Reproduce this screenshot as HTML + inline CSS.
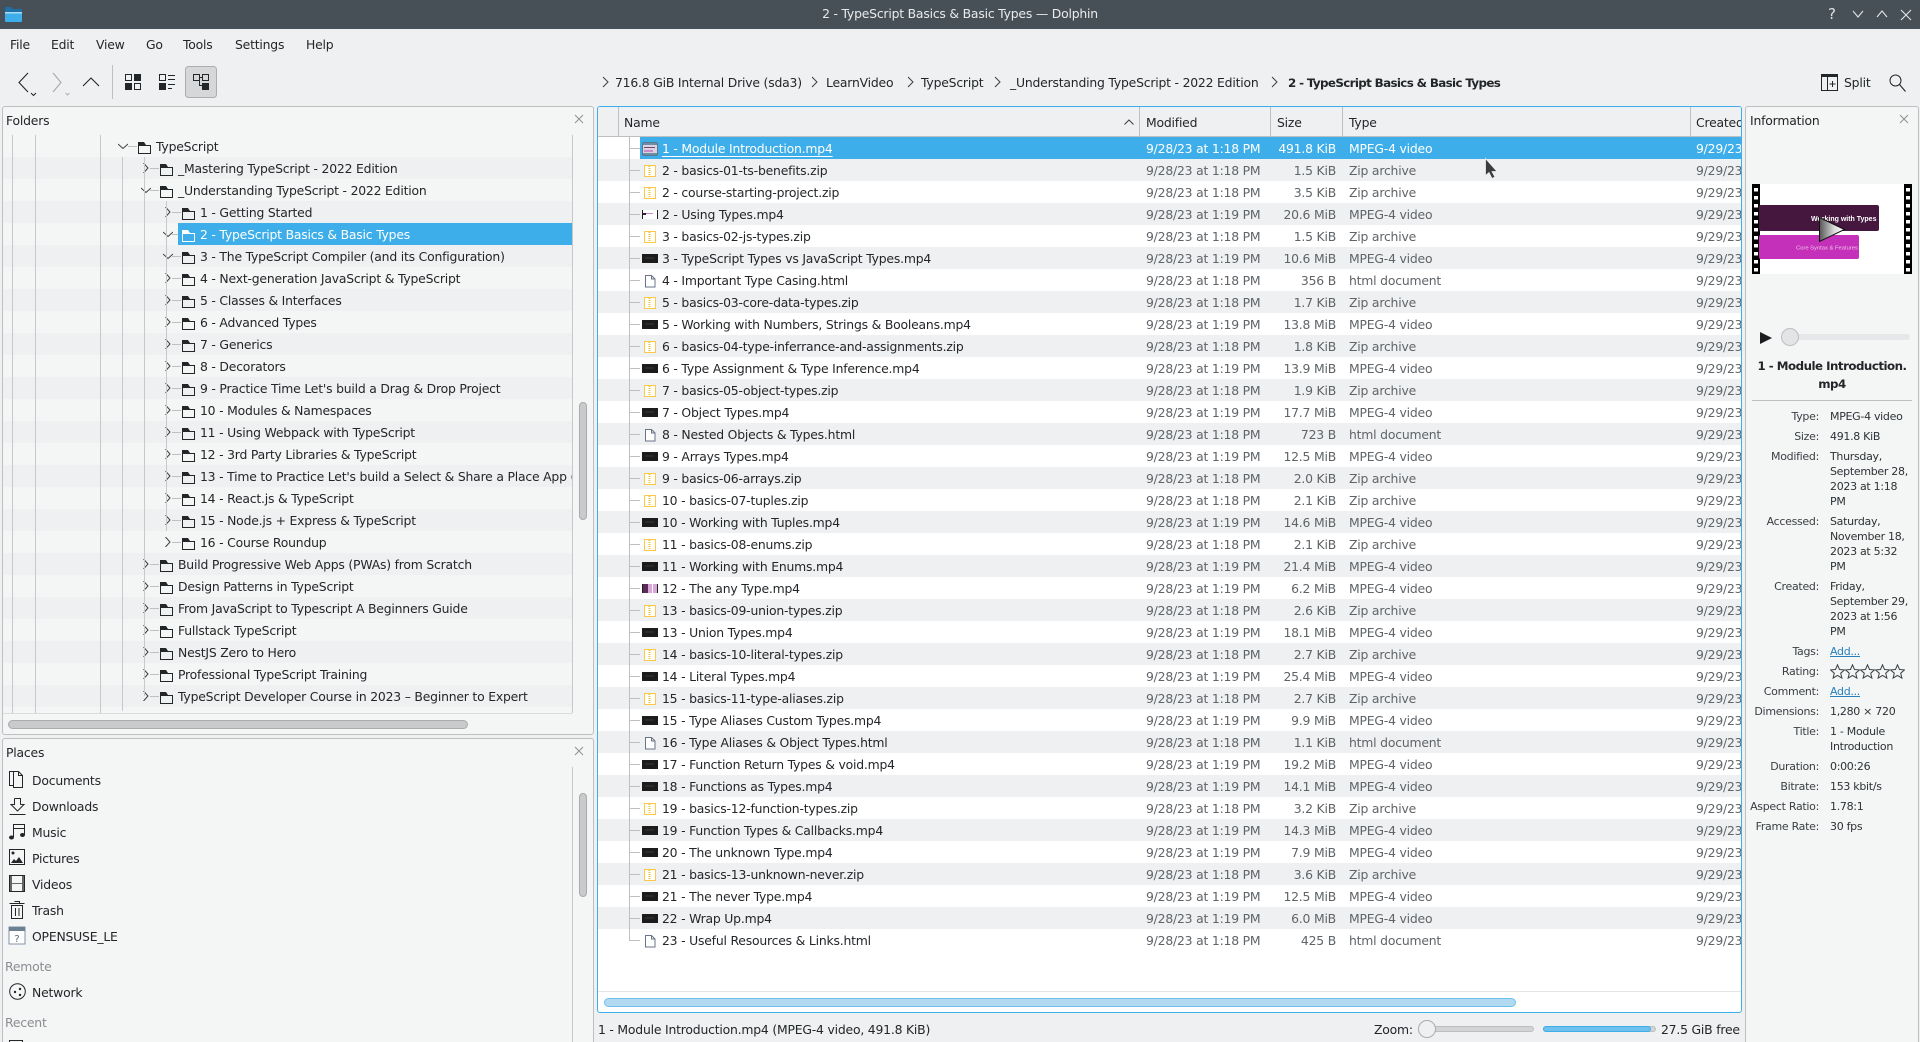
<!DOCTYPE html>
<html><head><meta charset="utf-8"><title>Dolphin</title>
<style>
*{box-sizing:border-box}
html,body{margin:0;padding:0;width:1920px;height:1042px;overflow:hidden;background:#eff0f1;font-family:"DejaVu Sans","Liberation Sans",sans-serif;font-size:12.4px;letter-spacing:-.2px;color:#232629}
.a{position:absolute;white-space:nowrap;line-height:24px;height:22px}
svg{position:absolute;display:block;overflow:visible}
.tb{position:absolute;left:0;top:0;width:1920px;height:29px;background:#475057}
.panel{position:absolute;background:#f4f5f5;border:1px solid #bdbfc0;border-radius:3px}
#view{position:absolute;left:597px;top:106px;width:1145px;height:907px;border:1px solid #3daee9;border-radius:3px;background:#fff;overflow:hidden}
#hd{position:absolute;left:0;top:0;width:1143px;height:30px;background:#eff0f1;border-bottom:1px solid #bdbfc0}
#hd i{position:absolute;top:0;width:1px;height:29px;background:#bdbfc0}
#list{position:absolute;left:0;top:30px;width:1143px;overflow:hidden}
.r{position:relative;height:22px;width:1143px;line-height:24px;white-space:nowrap}
.r:nth-child(even){background:#eff0f1}
.r::before{content:"";position:absolute;left:31px;top:11px;width:11px;height:1px;background:#bdbfc0}
.r svg{left:44px;top:3px;width:16px;height:16px}
.r b{position:absolute;left:64px;font-weight:normal}
.r span{position:absolute;color:#5f6468}
.m{left:548px}.s{left:640px;width:98px;text-align:right}.y{left:751px}.c{left:1098px}
#tree{position:absolute;left:3px;top:135px;width:569px;height:578px;overflow:hidden}
.tr{position:relative;height:22px;width:569px;line-height:24px;white-space:nowrap}
.tr:nth-child(even){background:#eff0f1}
.tr b{position:absolute;font-weight:normal}
.tr svg.f{top:7px;width:13px;height:12px}
.tr svg.x{top:6px;width:10px;height:10px}
.tr u{position:absolute;top:11px;height:1px;width:9px;background:#bdbfc0}
.l1 svg.x{left:115px}.l1 svg.f{left:135px}.l1 b{left:153px}.l1 u{left:125px}
.l2 svg.x{left:138px}.l2 svg.f{left:157px}.l2 b{left:175px}.l2 u{left:147px}
.l3 svg.x{left:160px}.l3 svg.f{left:179px}.l3 b{left:197px}.l3 u{left:169px}
.sel{background:#3daee9!important;position:absolute;left:178px;top:223px;width:394px;height:22px}
.g{position:absolute;width:1px;background:#c6c8c9}
.lab{position:absolute;left:1745px;width:74px;text-align:right;line-height:15px;height:15px;font-size:11px;letter-spacing:-.3px;white-space:nowrap;color:#3a3f43}
.val{position:absolute;left:1830px;line-height:15px;font-size:11px;letter-spacing:-.3px;white-space:nowrap;color:#2d3236}
.link{color:#2980b9;text-decoration:underline}
.hdr{color:#8a8e91}
</style></head><body>
<svg width="0" height="0" style="position:absolute">
<defs>
<symbol id="z" viewBox="0 0 16 16"><rect x="2.5" y="3.5" width="11" height="11" fill="#fff" stroke="#fbc947"/><path d="M7.5 4v9" stroke="#f5c040" stroke-dasharray="1 1" stroke-width="2"/></symbol>
<symbol id="v" viewBox="0 0 16 16"><rect x="0" y="4" width="16" height="9" fill="#1c1c1c"/><rect x="3" y="7" width="9" height="2" fill="#2b2b2b"/></symbol>
<symbol id="h" viewBox="0 0 16 16"><path d="M3.5 3.5h6l3.5 3.5v8h-9.500z M9.500 3.500v3.500h3.500" fill="#fff" stroke="#6a7488"/></symbol>
<symbol id="f" viewBox="0 0 13 12"><path d="M.5 3.500h12v8h-12z" fill="none" stroke="#232629"/><path d="M0 0h6l2 3v1H0z" fill="#232629"/></symbol>
<symbol id="fw" viewBox="0 0 13 12"><path d="M.5 3.500h12v8h-12z" fill="none" stroke="#fff"/><path d="M0 0h6l2 3v1H0z" fill="#fff"/></symbol>
<symbol id="cr" viewBox="0 0 10 10"><path d="M2.500 0l4.500 5-4.500 5" fill="none" stroke="#3a3f43"/></symbol>
<symbol id="cd" viewBox="0 0 10 10"><path d="M0 3l5 4.500L10 3" fill="none" stroke="#3a3f43"/></symbol>
<symbol id="xx" viewBox="0 0 10 10"><path d="M1 1l8 8M9 1l-8 8" fill="none" stroke="#8d9093"/></symbol>
<symbol id="star" viewBox="0 0 15 15"><path d="M7.500 .8l2 4.700 5 .4-3.800 3.300 1.200 4.900-4.400-2.600-4.400 2.600 1.200-4.900L.5 5.900l5-.4z" fill="none" stroke="#3a3f43"/></symbol>
</defs></svg>

<div class="tb"></div>
<svg style="left:4px;top:6px" width="19" height="17" viewBox="0 0 19 17"><path d="M1 2a1 1 0 0 1 1-1h5l2 2h8a1 1 0 0 1 1 1v11a1 1 0 0 1-1 1H2a1 1 0 0 1-1-1z" fill="#1d6fa5"/><path d="M1 6h17v9a1 1 0 0 1-1 1H2a1 1 0 0 1-1-1z" fill="#3daee9"/><path d="M1 6h17v1.500H1z" fill="#a8dcf5"/></svg>
<div class="a" style="left:660px;width:600px;top:2px;text-align:center;color:#e9ebed">2 - TypeScript Basics &amp; Basic Types — Dolphin</div>
<div class="a" style="left:1828px;top:2px;color:#dfe2e4;font-size:15px">?</div>
<svg style="left:1852px;top:9px" width="60" height="12" viewBox="0 0 60 12"><path d="M1 2l5 6 5-6M25 8l5-6 5 6M49 1l10 10M59 1L49 11" fill="none" stroke="#e4e6e8" stroke-width="1.100"/></svg>

<div class="a" style="left:10px;top:33px">File</div>
<div class="a" style="left:51px;top:33px">Edit</div>
<div class="a" style="left:96px;top:33px">View</div>
<div class="a" style="left:146px;top:33px">Go</div>
<div class="a" style="left:183px;top:33px">Tools</div>
<div class="a" style="left:235px;top:33px">Settings</div>
<div class="a" style="left:306px;top:33px">Help</div>

<!-- toolbar -->
<svg style="left:0;top:60px" width="230" height="44" viewBox="0 0 230 44">
<path d="M28 13l-9 9.500 9 9.500" fill="none" stroke="#232629" stroke-width="1.100"/>
<path d="M31 33l2.500 2.500 2.500-2.500" fill="none" stroke="#232629"/>
<path d="M53 13l8 9.500-8 9.500" fill="none" stroke="#a6a8aa" stroke-width="1.100"/>
<path d="M65.500 33l2 2 2-2" fill="none" stroke="#b0b2b4"/>
<path d="M83 26l8-8 8 8" fill="none" stroke="#232629" stroke-width="1.100"/>
<path d="M112.500 5v34" stroke="#bdbfc0"/>
<rect x="125.500" y="14.500" width="6" height="6" fill="none" stroke="#232629"/><rect x="134" y="14" width="7" height="7" fill="#232629"/><rect x="125" y="23" width="7" height="7" fill="#232629"/><rect x="134.500" y="23.500" width="6" height="6" fill="none" stroke="#232629"/>
<rect x="159.500" y="14.500" width="6" height="6" fill="none" stroke="#232629"/><path d="M168 15.500h7M168 19.500h7M168 24.500h7M168 28.500h4" stroke="#232629"/><rect x="159" y="23" width="7" height="7" fill="#232629"/>
<rect x="185.500" y="6.500" width="31" height="31" rx="3" fill="#d6d7d9" stroke="#abadae"/>
<rect x="193.500" y="14.500" width="6" height="6" fill="none" stroke="#232629"/><rect x="202.500" y="14.500" width="6" height="6" fill="none" stroke="#232629"/><path d="M199.500 17.500h3M199.500 20v5.500h3" fill="none" stroke="#232629"/><rect x="202" y="23" width="7" height="7" fill="#232629"/>
</svg>

<!-- breadcrumb -->
<svg style="left:602px;top:76px" width="690" height="12" viewBox="0 0 690 12"><path d="M1 1l5 5-5 5M210 1l5 5-5 5M306 1l5 5-5 5M393 1l5 5-5 5M670 1l5 5-5 5" fill="none" stroke="#3a3f43"/></svg>
<div class="a" style="left:615px;top:71px">716.8 GiB Internal Drive (sda3)</div>
<div class="a" style="left:826px;top:71px">LearnVideo</div>
<div class="a" style="left:921px;top:71px">TypeScript</div>
<div class="a" style="left:1010px;top:71px">_Understanding TypeScript - 2022 Edition</div>
<div class="a" style="left:1288px;top:71px;font-weight:bold;letter-spacing:-.65px;font-size:11.900px">2 - TypeScript Basics &amp; Basic Types</div>
<svg style="left:1821px;top:74px" width="17" height="17" viewBox="0 0 17 17"><path d="M.5 1.500h16v15H.5z M6.500 1.500v15" fill="none" stroke="#232629"/><path d="M0 0h17v3H0z" fill="#232629"/><path d="M11.500 7v6M8.500 10h6" stroke="#232629"/></svg>
<div class="a" style="left:1844px;top:71px">Split</div>
<svg style="left:1889px;top:74px" width="17" height="18" viewBox="0 0 17 18"><circle cx="6.500" cy="6.500" r="5.500" fill="none" stroke="#232629"/><path d="M10.500 10.500l6 7" stroke="#232629" stroke-width="1.100"/></svg>

<!-- folders panel -->
<div class="panel" style="left:2px;top:106px;width:592px;height:629px"></div>
<div class="a" style="left:6px;top:109px">Folders</div>
<svg style="left:574px;top:114px" width="10" height="10"><use href="#xx"/></svg>
<div id="tree">
<div class="tr l1"><svg class="x"><use href="#cd"/></svg><u></u><svg class="f"><use href="#f"/></svg><b>TypeScript</b></div>
<div class="tr l2"><svg class="x"><use href="#cr"/></svg><u></u><svg class="f"><use href="#f"/></svg><b>_Mastering TypeScript - 2022 Edition</b></div>
<div class="tr l2"><svg class="x"><use href="#cd"/></svg><u></u><svg class="f"><use href="#f"/></svg><b>_Understanding TypeScript - 2022 Edition</b></div>
<div class="tr l3"><svg class="x"><use href="#cr"/></svg><u></u><svg class="f"><use href="#f"/></svg><b>1 - Getting Started</b></div>
<div class="tr l3"><svg class="x"><use href="#cd"/></svg><u></u></div>
<div class="tr l3"><svg class="x"><use href="#cd"/></svg><u></u><svg class="f"><use href="#f"/></svg><b>3 - The TypeScript Compiler (and its Configuration)</b></div>
<div class="tr l3"><svg class="x"><use href="#cr"/></svg><u></u><svg class="f"><use href="#f"/></svg><b>4 - Next-generation JavaScript &amp; TypeScript</b></div>
<div class="tr l3"><svg class="x"><use href="#cr"/></svg><u></u><svg class="f"><use href="#f"/></svg><b>5 - Classes &amp; Interfaces</b></div>
<div class="tr l3"><svg class="x"><use href="#cr"/></svg><u></u><svg class="f"><use href="#f"/></svg><b>6 - Advanced Types</b></div>
<div class="tr l3"><svg class="x"><use href="#cr"/></svg><u></u><svg class="f"><use href="#f"/></svg><b>7 - Generics</b></div>
<div class="tr l3"><svg class="x"><use href="#cr"/></svg><u></u><svg class="f"><use href="#f"/></svg><b>8 - Decorators</b></div>
<div class="tr l3"><svg class="x"><use href="#cr"/></svg><u></u><svg class="f"><use href="#f"/></svg><b>9 - Practice Time Let's build a Drag &amp; Drop Project</b></div>
<div class="tr l3"><svg class="x"><use href="#cr"/></svg><u></u><svg class="f"><use href="#f"/></svg><b>10 - Modules &amp; Namespaces</b></div>
<div class="tr l3"><svg class="x"><use href="#cr"/></svg><u></u><svg class="f"><use href="#f"/></svg><b>11 - Using Webpack with TypeScript</b></div>
<div class="tr l3"><svg class="x"><use href="#cr"/></svg><u></u><svg class="f"><use href="#f"/></svg><b>12 - 3rd Party Libraries &amp; TypeScript</b></div>
<div class="tr l3"><svg class="x"><use href="#cr"/></svg><u></u><svg class="f"><use href="#f"/></svg><b>13 - Time to Practice Let's build a Select &amp; Share a Place App (Google</b></div>
<div class="tr l3"><svg class="x"><use href="#cr"/></svg><u></u><svg class="f"><use href="#f"/></svg><b>14 - React.js &amp; TypeScript</b></div>
<div class="tr l3"><svg class="x"><use href="#cr"/></svg><u></u><svg class="f"><use href="#f"/></svg><b>15 - Node.js + Express &amp; TypeScript</b></div>
<div class="tr l3"><svg class="x"><use href="#cr"/></svg><u></u><svg class="f"><use href="#f"/></svg><b>16 - Course Roundup</b></div>
<div class="tr l2"><svg class="x"><use href="#cr"/></svg><u></u><svg class="f"><use href="#f"/></svg><b>Build Progressive Web Apps (PWAs) from Scratch</b></div>
<div class="tr l2"><svg class="x"><use href="#cr"/></svg><u></u><svg class="f"><use href="#f"/></svg><b>Design Patterns in TypeScript</b></div>
<div class="tr l2"><svg class="x"><use href="#cr"/></svg><u></u><svg class="f"><use href="#f"/></svg><b>From JavaScript to Typescript A Beginners Guide</b></div>
<div class="tr l2"><svg class="x"><use href="#cr"/></svg><u></u><svg class="f"><use href="#f"/></svg><b>Fullstack TypeScript</b></div>
<div class="tr l2"><svg class="x"><use href="#cr"/></svg><u></u><svg class="f"><use href="#f"/></svg><b>NestJS Zero to Hero</b></div>
<div class="tr l2"><svg class="x"><use href="#cr"/></svg><u></u><svg class="f"><use href="#f"/></svg><b>Professional TypeScript Training</b></div>
<div class="tr l2"><svg class="x"><use href="#cr"/></svg><u></u><svg class="f"><use href="#f"/></svg><b>TypeScript Developer Course in 2023 – Beginner to Expert</b></div>
</div>
<div class="sel"></div>
<svg style="left:182px;top:230px" width="13" height="12"><use href="#fw"/></svg>
<div class="a" style="left:200px;top:223px;color:#fff">2 - TypeScript Basics &amp; Basic Types</div>
<div class="g" style="left:12px;top:135px;height:578px"></div>
<div class="g" style="left:35px;top:135px;height:578px"></div>
<div class="g" style="left:100px;top:135px;height:578px"></div>
<div class="g" style="left:122px;top:157px;height:554px"></div>
<div class="g" style="left:144px;top:157px;height:539px"></div>
<div class="g" style="left:166px;top:201px;height:330px"></div>
<div style="position:absolute;left:3px;top:713px;width:569px;height:1px;background:#d9dadb"></div>
<div class="g" style="left:572px;top:135px;height:578px"></div>
<div style="position:absolute;left:579px;top:402px;width:8px;height:118px;border-radius:4px;background:#c8cacb;border:1px solid #a9abac"></div>
<div style="position:absolute;left:8px;top:720px;width:460px;height:9px;border-radius:5px;background:#c8cacb;border:1px solid #a9abac"></div>

<!-- places -->
<div class="panel" style="left:2px;top:738px;width:592px;height:304px;border-bottom:0;border-radius:3px 3px 0 0"></div>
<div class="a" style="left:6px;top:741px">Places</div>
<svg style="left:574px;top:746px" width="10" height="10"><use href="#xx"/></svg>
<div class="g" style="left:572px;top:767px;height:275px"></div>
<div style="position:absolute;left:579px;top:793px;width:8px;height:104px;border-radius:4px;background:#c8cacb;border:1px solid #a9abac"></div>
<svg style="left:8px;top:770px" width="20" height="180" viewBox="0 0 20 180">
<g fill="none" stroke="#232629">
<path d="M1.500 1.500h4v14h-4zM5.500 4.500h0M5.500 1.500h5l4 4v12h-9zM10.500 1.500v4h4" fill="#f4f5f5"/>
<path d="M6.500 28.500v6h-3.500l6.500 6.500 6.500-6.500h-3.500M6.500 28.500h6v6M1.500 44.500h16" />
<path d="M5.500 67v-12.500h11v10M5.500 58.500h11"/>
<rect x="1.500" y="79.500" width="15" height="15"/>
<rect x="1" y="105" width="16" height="17" fill="#666" stroke="none"/>
<rect x="4" y="106" width="10" height="7" fill="#f4f5f5" stroke="none"/><rect x="4" y="114" width="10" height="7" fill="#f4f5f5" stroke="none"/>
<rect x="1.500" y="105.500" width="15" height="16"/>
<path d="M3.500 135.500h11v13h-11zM1.500 133.500h15M6.500 131.500h5v2M7.500 138v8M11 138v8"/>
</g>
<ellipse cx="3.500" cy="67.500" rx="2.500" ry="2" fill="#232629"/><ellipse cx="14.500" cy="65" rx="2.500" ry="2" fill="#232629"/>
<circle cx="5" cy="83" r="1.500" fill="#232629"/><path d="M3 93l3-4 2 2 3-4 4 6z" fill="#232629"/>
<rect x="1" y="157" width="16" height="17" fill="#fff" stroke="#8194a8"/><rect x="1" y="157" width="16" height="4" fill="#6d7f92"/>
<text x="9" y="172" font-size="10" text-anchor="middle" fill="#5b6b7c" font-family="DejaVu Sans" letter-spacing="0">?</text>
</svg>
<div class="a" style="left:32px;top:769px">Documents</div>
<div class="a" style="left:32px;top:795px">Downloads</div>
<div class="a" style="left:32px;top:821px">Music</div>
<div class="a" style="left:32px;top:847px">Pictures</div>
<div class="a" style="left:32px;top:873px">Videos</div>
<div class="a" style="left:32px;top:899px">Trash</div>
<div class="a" style="left:32px;top:925px">OPENSUSE_LE</div>
<div class="a hdr" style="left:5px;top:955px">Remote</div>
<svg style="left:9px;top:983px" width="18" height="18" viewBox="0 0 18 18"><circle cx="8.500" cy="8.500" r="7.800" fill="none" stroke="#232629"/><circle cx="6" cy="9" r="1.200" fill="#232629"/><circle cx="11" cy="6" r="1.200" fill="#232629"/><circle cx="11" cy="12" r="1.200" fill="#232629"/></svg>
<div class="a" style="left:32px;top:981px">Network</div>
<div class="a hdr" style="left:5px;top:1011px">Recent</div>
<div style="position:absolute;left:9px;top:1040px;width:14px;height:2px;border:1px solid #232629;border-bottom:0"></div>

<!-- main view -->
<div id="view">
<div id="hd">
<i style="left:20px"></i>
<div class="a" style="left:26px;top:4px">Name</div>
<svg style="left:526px;top:12px" width="10" height="6"><path d="M.5 5.500l4.500-4.500 4.500 4.500" fill="none" stroke="#3a3f43"/></svg>
<i style="left:541px"></i>
<div class="a" style="left:548px;top:4px">Modified</div>
<i style="left:672px"></i>
<div class="a" style="left:679px;top:4px">Size</div>
<i style="left:744px"></i>
<div class="a" style="left:751px;top:4px">Type</div>
<i style="left:1092px"></i>
<div class="a" style="left:1098px;top:4px">Created</div>
</div>
<div id="list">
<div class="r"><b>1 - Module Introduction.mp4</b><span class="m">9/28/23 at 1:18 PM</span><span class="s">491.8 KiB</span><span class="y">MPEG-4 video</span><span class="c">9/29/23</span></div>
<div class="r"><svg><use href="#z"/></svg><b>2 - basics-01-ts-benefits.zip</b><span class="m">9/28/23 at 1:18 PM</span><span class="s">1.5 KiB</span><span class="y">Zip archive</span><span class="c">9/29/23</span></div>
<div class="r"><svg><use href="#z"/></svg><b>2 - course-starting-project.zip</b><span class="m">9/28/23 at 1:18 PM</span><span class="s">3.5 KiB</span><span class="y">Zip archive</span><span class="c">9/29/23</span></div>
<div class="r"><svg viewBox="0 0 16 16"><rect x="0" y="4" width="16" height="9" fill="#fff"/><rect x="0" y="4" width="1" height="9" fill="#222"/><rect x="15" y="4" width="1" height="9" fill="#222"/><rect x="1" y="7" width="3" height="2" fill="#45173f"/><rect x="4" y="7" width="7" height="1" fill="#c58fc4"/></svg><b>2 - Using Types.mp4</b><span class="m">9/28/23 at 1:19 PM</span><span class="s">20.6 MiB</span><span class="y">MPEG-4 video</span><span class="c">9/29/23</span></div>
<div class="r"><svg><use href="#z"/></svg><b>3 - basics-02-js-types.zip</b><span class="m">9/28/23 at 1:18 PM</span><span class="s">1.5 KiB</span><span class="y">Zip archive</span><span class="c">9/29/23</span></div>
<div class="r"><svg><use href="#v"/></svg><b>3 - TypeScript Types vs JavaScript Types.mp4</b><span class="m">9/28/23 at 1:19 PM</span><span class="s">10.6 MiB</span><span class="y">MPEG-4 video</span><span class="c">9/29/23</span></div>
<div class="r"><svg><use href="#h"/></svg><b>4 - Important Type Casing.html</b><span class="m">9/28/23 at 1:18 PM</span><span class="s">356 B</span><span class="y">html document</span><span class="c">9/29/23</span></div>
<div class="r"><svg><use href="#z"/></svg><b>5 - basics-03-core-data-types.zip</b><span class="m">9/28/23 at 1:18 PM</span><span class="s">1.7 KiB</span><span class="y">Zip archive</span><span class="c">9/29/23</span></div>
<div class="r"><svg><use href="#v"/></svg><b>5 - Working with Numbers, Strings &amp; Booleans.mp4</b><span class="m">9/28/23 at 1:19 PM</span><span class="s">13.8 MiB</span><span class="y">MPEG-4 video</span><span class="c">9/29/23</span></div>
<div class="r"><svg><use href="#z"/></svg><b>6 - basics-04-type-inferrance-and-assignments.zip</b><span class="m">9/28/23 at 1:18 PM</span><span class="s">1.8 KiB</span><span class="y">Zip archive</span><span class="c">9/29/23</span></div>
<div class="r"><svg><use href="#v"/></svg><b>6 - Type Assignment &amp; Type Inference.mp4</b><span class="m">9/28/23 at 1:19 PM</span><span class="s">13.9 MiB</span><span class="y">MPEG-4 video</span><span class="c">9/29/23</span></div>
<div class="r"><svg><use href="#z"/></svg><b>7 - basics-05-object-types.zip</b><span class="m">9/28/23 at 1:18 PM</span><span class="s">1.9 KiB</span><span class="y">Zip archive</span><span class="c">9/29/23</span></div>
<div class="r"><svg><use href="#v"/></svg><b>7 - Object Types.mp4</b><span class="m">9/28/23 at 1:19 PM</span><span class="s">17.7 MiB</span><span class="y">MPEG-4 video</span><span class="c">9/29/23</span></div>
<div class="r"><svg><use href="#h"/></svg><b>8 - Nested Objects &amp; Types.html</b><span class="m">9/28/23 at 1:18 PM</span><span class="s">723 B</span><span class="y">html document</span><span class="c">9/29/23</span></div>
<div class="r"><svg><use href="#v"/></svg><b>9 - Arrays Types.mp4</b><span class="m">9/28/23 at 1:19 PM</span><span class="s">12.5 MiB</span><span class="y">MPEG-4 video</span><span class="c">9/29/23</span></div>
<div class="r"><svg><use href="#z"/></svg><b>9 - basics-06-arrays.zip</b><span class="m">9/28/23 at 1:18 PM</span><span class="s">2.0 KiB</span><span class="y">Zip archive</span><span class="c">9/29/23</span></div>
<div class="r"><svg><use href="#z"/></svg><b>10 - basics-07-tuples.zip</b><span class="m">9/28/23 at 1:18 PM</span><span class="s">2.1 KiB</span><span class="y">Zip archive</span><span class="c">9/29/23</span></div>
<div class="r"><svg><use href="#v"/></svg><b>10 - Working with Tuples.mp4</b><span class="m">9/28/23 at 1:19 PM</span><span class="s">14.6 MiB</span><span class="y">MPEG-4 video</span><span class="c">9/29/23</span></div>
<div class="r"><svg><use href="#z"/></svg><b>11 - basics-08-enums.zip</b><span class="m">9/28/23 at 1:18 PM</span><span class="s">2.1 KiB</span><span class="y">Zip archive</span><span class="c">9/29/23</span></div>
<div class="r"><svg><use href="#v"/></svg><b>11 - Working with Enums.mp4</b><span class="m">9/28/23 at 1:19 PM</span><span class="s">21.4 MiB</span><span class="y">MPEG-4 video</span><span class="c">9/29/23</span></div>
<div class="r"><svg viewBox="0 0 16 16"><rect x="0" y="4" width="16" height="9" fill="#d9a8d8"/><rect x="0" y="4" width="1" height="9" fill="#222"/><rect x="1" y="4" width="5" height="9" fill="#5b2c57"/><rect x="10" y="4" width="1" height="9" fill="#fff"/><rect x="15" y="4" width="1" height="9" fill="#222"/></svg><b>12 - The any Type.mp4</b><span class="m">9/28/23 at 1:19 PM</span><span class="s">6.2 MiB</span><span class="y">MPEG-4 video</span><span class="c">9/29/23</span></div>
<div class="r"><svg><use href="#z"/></svg><b>13 - basics-09-union-types.zip</b><span class="m">9/28/23 at 1:18 PM</span><span class="s">2.6 KiB</span><span class="y">Zip archive</span><span class="c">9/29/23</span></div>
<div class="r"><svg><use href="#v"/></svg><b>13 - Union Types.mp4</b><span class="m">9/28/23 at 1:19 PM</span><span class="s">18.1 MiB</span><span class="y">MPEG-4 video</span><span class="c">9/29/23</span></div>
<div class="r"><svg><use href="#z"/></svg><b>14 - basics-10-literal-types.zip</b><span class="m">9/28/23 at 1:18 PM</span><span class="s">2.7 KiB</span><span class="y">Zip archive</span><span class="c">9/29/23</span></div>
<div class="r"><svg><use href="#v"/></svg><b>14 - Literal Types.mp4</b><span class="m">9/28/23 at 1:19 PM</span><span class="s">25.4 MiB</span><span class="y">MPEG-4 video</span><span class="c">9/29/23</span></div>
<div class="r"><svg><use href="#z"/></svg><b>15 - basics-11-type-aliases.zip</b><span class="m">9/28/23 at 1:18 PM</span><span class="s">2.7 KiB</span><span class="y">Zip archive</span><span class="c">9/29/23</span></div>
<div class="r"><svg><use href="#v"/></svg><b>15 - Type Aliases Custom Types.mp4</b><span class="m">9/28/23 at 1:19 PM</span><span class="s">9.9 MiB</span><span class="y">MPEG-4 video</span><span class="c">9/29/23</span></div>
<div class="r"><svg><use href="#h"/></svg><b>16 - Type Aliases &amp; Object Types.html</b><span class="m">9/28/23 at 1:18 PM</span><span class="s">1.1 KiB</span><span class="y">html document</span><span class="c">9/29/23</span></div>
<div class="r"><svg><use href="#v"/></svg><b>17 - Function Return Types &amp; void.mp4</b><span class="m">9/28/23 at 1:19 PM</span><span class="s">19.2 MiB</span><span class="y">MPEG-4 video</span><span class="c">9/29/23</span></div>
<div class="r"><svg><use href="#v"/></svg><b>18 - Functions as Types.mp4</b><span class="m">9/28/23 at 1:19 PM</span><span class="s">14.1 MiB</span><span class="y">MPEG-4 video</span><span class="c">9/29/23</span></div>
<div class="r"><svg><use href="#z"/></svg><b>19 - basics-12-function-types.zip</b><span class="m">9/28/23 at 1:18 PM</span><span class="s">3.2 KiB</span><span class="y">Zip archive</span><span class="c">9/29/23</span></div>
<div class="r"><svg><use href="#v"/></svg><b>19 - Function Types &amp; Callbacks.mp4</b><span class="m">9/28/23 at 1:19 PM</span><span class="s">14.3 MiB</span><span class="y">MPEG-4 video</span><span class="c">9/29/23</span></div>
<div class="r"><svg><use href="#v"/></svg><b>20 - The unknown Type.mp4</b><span class="m">9/28/23 at 1:19 PM</span><span class="s">7.9 MiB</span><span class="y">MPEG-4 video</span><span class="c">9/29/23</span></div>
<div class="r"><svg><use href="#z"/></svg><b>21 - basics-13-unknown-never.zip</b><span class="m">9/28/23 at 1:18 PM</span><span class="s">3.6 KiB</span><span class="y">Zip archive</span><span class="c">9/29/23</span></div>
<div class="r"><svg><use href="#v"/></svg><b>21 - The never Type.mp4</b><span class="m">9/28/23 at 1:19 PM</span><span class="s">12.5 MiB</span><span class="y">MPEG-4 video</span><span class="c">9/29/23</span></div>
<div class="r"><svg><use href="#v"/></svg><b>22 - Wrap Up.mp4</b><span class="m">9/28/23 at 1:19 PM</span><span class="s">6.0 MiB</span><span class="y">MPEG-4 video</span><span class="c">9/29/23</span></div>
<div class="r"><svg><use href="#h"/></svg><b>23 - Useful Resources &amp; Links.html</b><span class="m">9/28/23 at 1:18 PM</span><span class="s">425 B</span><span class="y">html document</span><span class="c">9/29/23</span></div>
</div>
<!-- selected row overlay -->
<div style="position:absolute;left:42px;top:30px;width:1101px;height:22px;background:#3daee9"></div>
<svg style="left:44px;top:35px" width="16" height="14" viewBox="0 0 16 14"><rect x=".5" y=".5" width="15" height="13" rx="1.500" fill="#6d8fa6" stroke="#57788f"/><rect x="1" y="3" width="14" height="8" fill="#dcd2e2"/><rect x="2" y="5" width="11" height="1" fill="#6f4a72"/><rect x="2" y="8" width="9" height="2" fill="#c88ac8"/></svg>
<div class="a" style="left:64px;top:30px;color:#fff;text-decoration:underline;text-underline-offset:3px">1 - Module Introduction.mp4</div>
<div class="a" style="left:548px;top:30px;color:#fff">9/28/23 at 1:18 PM</div>
<div class="a" style="left:640px;top:30px;width:98px;text-align:right;color:#fff">491.8 KiB</div>
<div class="a" style="left:751px;top:30px;color:#fff">MPEG-4 video</div>
<div class="a" style="left:1098px;top:30px;color:#fff">9/29/23</div>
<div class="g" style="left:31px;top:30px;height:804px;background:#bdbfc0"></div>
<div style="position:absolute;left:0;top:884px;width:1143px;height:1px;background:#e3e4e5"></div>
<div style="position:absolute;left:6px;top:891px;width:912px;height:9px;border-radius:5px;background:#b1d9f0;border:1px solid #6ec1ee"></div>
</div>

<!-- cursor -->
<svg style="left:1485px;top:158px" width="14" height="22" viewBox="0 0 14 22"><path d="M.5 .5v17l3.500-3 3 6 3-1.500-3-5.500h5z" fill="#3a3c3e" stroke="#eee" stroke-width=".8"/></svg>

<!-- info panel -->
<div class="panel" style="left:1745px;top:106px;width:174px;height:936px;border-bottom:0;border-radius:3px 3px 0 0"></div>
<div class="a" style="left:1750px;top:109px">Information</div>
<svg style="left:1899px;top:114px" width="10" height="10"><use href="#xx"/></svg>
<svg style="left:1752px;top:184px" width="160" height="90" viewBox="0 0 160 90">
<defs><pattern id="holes" x="0" y="2" width="8" height="8" patternUnits="userSpaceOnUse"><rect x="0" y="0" width="8" height="8" fill="#000"/><rect x="2" y="2" width="4" height="3.500" fill="#fff"/></pattern>
<linearGradient id="pg" x1="0" x2="1" y1="0" y2="0"><stop offset="0" stop-color="#555"/><stop offset=".6" stop-color="#ddd"/><stop offset="1" stop-color="#fff"/></linearGradient></defs>
<rect width="160" height="90" fill="#fff"/>
<rect x="0" y="0" width="8" height="90" fill="url(#holes)"/><rect x="152" y="0" width="8" height="90" fill="url(#holes)"/>
<rect x="7" y="21" width="120" height="26" rx="2" fill="#45173f"/>
<rect x="7" y="51" width="100" height="24" rx="2" fill="#c430b9"/>
<text x="59" y="37" font-size="7" font-weight="bold" fill="#fff" font-family="Liberation Sans" letter-spacing="0">Working with Types</text>
<text x="44" y="65.500" font-size="5.800" fill="#f0c0ea" font-family="Liberation Sans" letter-spacing="0">Core Syntax &amp; Features</text>
<path d="M67.500 33.500l25 12-25 12z" fill="url(#pg)" stroke="#111"/>
</svg>
<svg style="left:1760px;top:332px" width="12" height="12"><path d="M0 0l12 6-12 6z" fill="#1b1d1f"/></svg>
<div style="position:absolute;left:1790px;top:334px;width:120px;height:6px;border-radius:3px;background:#e6e7e8"></div>
<div style="position:absolute;left:1781px;top:328px;width:18px;height:18px;border-radius:50%;background:#e3e4e5;border:1.500px solid #bdbfc0"></div>
<div class="a" style="left:1745px;width:174px;top:354px;text-align:center;font-weight:bold;font-size:11.800px;letter-spacing:-.5px">1 - Module Introduction.</div>
<div class="a" style="left:1745px;width:174px;top:372px;text-align:center;font-weight:bold;font-size:11.800px;letter-spacing:-.5px">mp4</div>
<div style="position:absolute;left:1752px;top:400px;width:160px;height:1px;background:#bdbfc0"></div>
<div class="lab" style="top:409px">Type:</div><div class="val" style="top:409px">MPEG-4 video</div>
<div class="lab" style="top:429px">Size:</div><div class="val" style="top:429px">491.8 KiB</div>
<div class="lab" style="top:449px">Modified:</div><div class="val" style="top:449px">Thursday,<br>September 28,<br>2023 at 1:18<br>PM</div>
<div class="lab" style="top:514px">Accessed:</div><div class="val" style="top:514px">Saturday,<br>November 18,<br>2023 at 5:32<br>PM</div>
<div class="lab" style="top:579px">Created:</div><div class="val" style="top:579px">Friday,<br>September 29,<br>2023 at 1:56<br>PM</div>
<div class="lab" style="top:644px">Tags:</div><div class="val link" style="top:644px">Add...</div>
<div class="lab" style="top:664px">Rating:</div>
<svg style="left:1830px;top:664px" width="75" height="15"><use href="#star" width="15" height="15"/><use href="#star" x="15" width="15" height="15"/><use href="#star" x="30" width="15" height="15"/><use href="#star" x="45" width="15" height="15"/><use href="#star" x="60" width="15" height="15"/></svg>
<div class="lab" style="top:684px">Comment:</div><div class="val link" style="top:684px">Add...</div>
<div class="lab" style="top:704px">Dimensions:</div><div class="val" style="top:704px">1,280 × 720</div>
<div class="lab" style="top:724px">Title:</div><div class="val" style="top:724px">1 - Module<br>Introduction</div>
<div class="lab" style="top:759px">Duration:</div><div class="val" style="top:759px">0:00:26</div>
<div class="lab" style="top:779px">Bitrate:</div><div class="val" style="top:779px">153 kbit/s</div>
<div class="lab" style="top:799px">Aspect Ratio:</div><div class="val" style="top:799px">1.78:1</div>
<div class="lab" style="top:819px">Frame Rate:</div><div class="val" style="top:819px">30 fps</div>

<!-- status bar -->
<div class="a" style="left:598px;top:1018px">1 - Module Introduction.mp4 (MPEG-4 video, 491.8 KiB)</div>
<div class="a" style="left:1374px;top:1018px">Zoom:</div>
<div style="position:absolute;left:1426px;top:1026px;width:108px;height:6px;border-radius:3px;background:#d3d4d5;border:1px solid #bcbebf"></div>
<div style="position:absolute;left:1418px;top:1020px;width:18px;height:18px;border-radius:50%;background:#eff0f1;border:1.500px solid #a9abac"></div>
<div style="position:absolute;left:1543px;top:1026px;width:113px;height:6px;border-radius:3px;background:#d3d4d5;border:1px solid #bcbebf"></div>
<div style="position:absolute;left:1543px;top:1026px;width:108px;height:6px;border-radius:3px;background:#6ec1ee;border:1px solid #3daee9"></div>
<div class="a" style="left:1661px;top:1018px">27.5 GiB free</div>
</body></html>
